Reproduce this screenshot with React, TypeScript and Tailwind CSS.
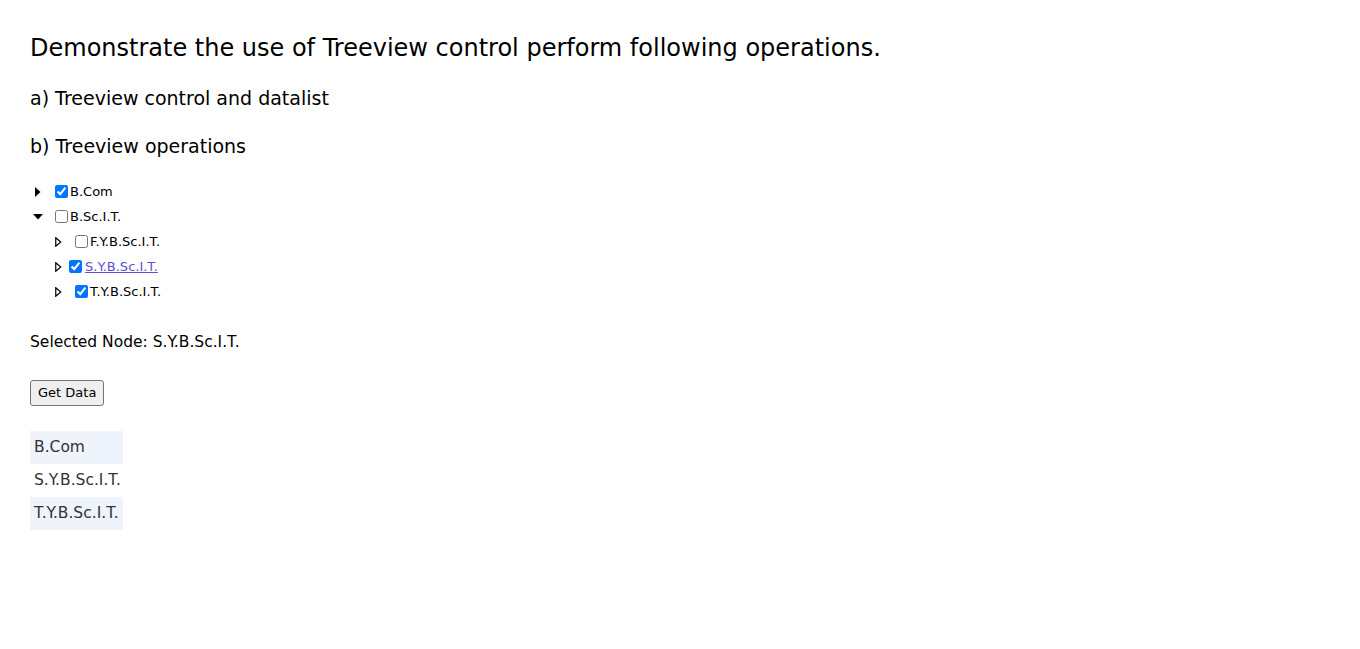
import { useState } from "react";

type Node = {
  label: string;
  checked: boolean;
  children?: Node[];
};

function Arrow({ kind }: { kind: "right" | "down" | "hollow" }) {
  if (kind === "down") {
    return (
      <svg width="10" height="6" viewBox="0 0 10 6">
        <polygon points="0,0 10,0 5,5.5" fill="#000" />
      </svg>
    );
  }
  if (kind === "hollow") {
    return (
      <svg width="7" height="10" viewBox="0 0 7 10">
        <polygon points="0.75,0.75 5.75,5 0.75,9.25" fill="#fff" stroke="#000" strokeWidth="1.2" />
      </svg>
    );
  }
  return (
    <svg width="6" height="10" viewBox="0 0 6 10">
      <polygon points="0,0 5.5,5 0,10" fill="#000" />
    </svg>
  );
}

export default function App() {
  const [tree, setTree] = useState<Node[]>([
    { label: "B.Com", checked: true },
    {
      label: "B.Sc.I.T.",
      checked: false,
      children: [
        { label: "F.Y.B.Sc.I.T.", checked: false },
        { label: "S.Y.B.Sc.I.T.", checked: true },
        { label: "T.Y.B.Sc.I.T.", checked: true },
      ],
    },
  ]);
  const [selected, setSelected] = useState("S.Y.B.Sc.I.T.");
  const [data, setData] = useState<string[]>(["B.Com", "S.Y.B.Sc.I.T.", "T.Y.B.Sc.I.T."]);

  const toggle = (label: string) => {
    const walk = (nodes: Node[]): Node[] =>
      nodes.map((n) => ({
        ...n,
        checked: n.label === label ? !n.checked : n.checked,
        children: n.children ? walk(n.children) : undefined,
      }));
    setTree(walk(tree));
  };

  const handleGetData = () => {
    const out: string[] = [];
    const walk = (nodes: Node[]) =>
      nodes.forEach((n) => {
        if (n.checked) out.push(n.label);
        if (n.children) walk(n.children);
      });
    walk(tree);
    setData(out);
  };

  // child checkbox offsets are a bit uneven in the original
  const childGap = ["ml-[9px]", "ml-[3px]", "ml-[9px]"];

  return (
    <div className="min-h-screen bg-white px-[30px] pt-[31px] text-black font-['DejaVu_Sans',sans-serif]">
      <h2 className="text-[24px] leading-[34px]">
        Demonstrate the use of Treeview control perform following operations.
      </h2>
      <h3 className="mt-[20px] text-[19px] leading-[26px]">a) Treeview control and datalist</h3>
      <h3 className="mt-[22px] text-[19px] leading-[26px]">b) Treeview operations</h3>

      <div className="mt-[20px] text-[13px]">
        {tree.map((node) => (
          <div key={node.label}>
            <div className="flex h-[25px] items-center">
              <span className="flex w-[16px] justify-center">
                <Arrow kind={node.children ? "down" : "right"} />
              </span>
              <input
                type="checkbox"
                checked={node.checked}
                onChange={() => toggle(node.label)}
                className="m-0 ml-[9px] h-[13px] w-[13px]"
              />
              <span className="ml-[2px]">{node.label}</span>
            </div>
            {node.children?.map((child, i) => (
              <div key={child.label} className="flex h-[25px] items-center pl-[20px]">
                <span className="flex w-[16px] justify-center">
                  <Arrow kind="hollow" />
                </span>
                <input
                  type="checkbox"
                  checked={child.checked}
                  onChange={() => toggle(child.label)}
                  className={`m-0 h-[13px] w-[13px] ${childGap[i]}`}
                />
                <button
                  onClick={() => setSelected(child.label)}
                  className={
                    selected === child.label
                      ? "ml-[3px] text-[#5d50d2] underline"
                      : "ml-[2px]"
                  }
                >
                  {child.label}
                </button>
              </div>
            ))}
          </div>
        ))}
      </div>

      <p className="mt-[28px] text-[15.5px] leading-[20px]">Selected Node: {selected}</p>

      <button
        onClick={handleGetData}
        className="mt-[28px] h-[26px] rounded-[3px] border border-[#767676] bg-[#efefef] px-[7px] text-[13px]"
      >
        Get Data
      </button>

      <div className="mt-[25px] w-[93px] text-[15.5px] text-[#333333]">
        {data.map((d, i) => (
          <div key={d} className={`flex h-[33px] items-center px-[4px] pt-px ${i % 2 === 0 ? "bg-[#eff3fb]" : "bg-white"}`}>
            {d}
          </div>
        ))}
      </div>
    </div>
  );
}
